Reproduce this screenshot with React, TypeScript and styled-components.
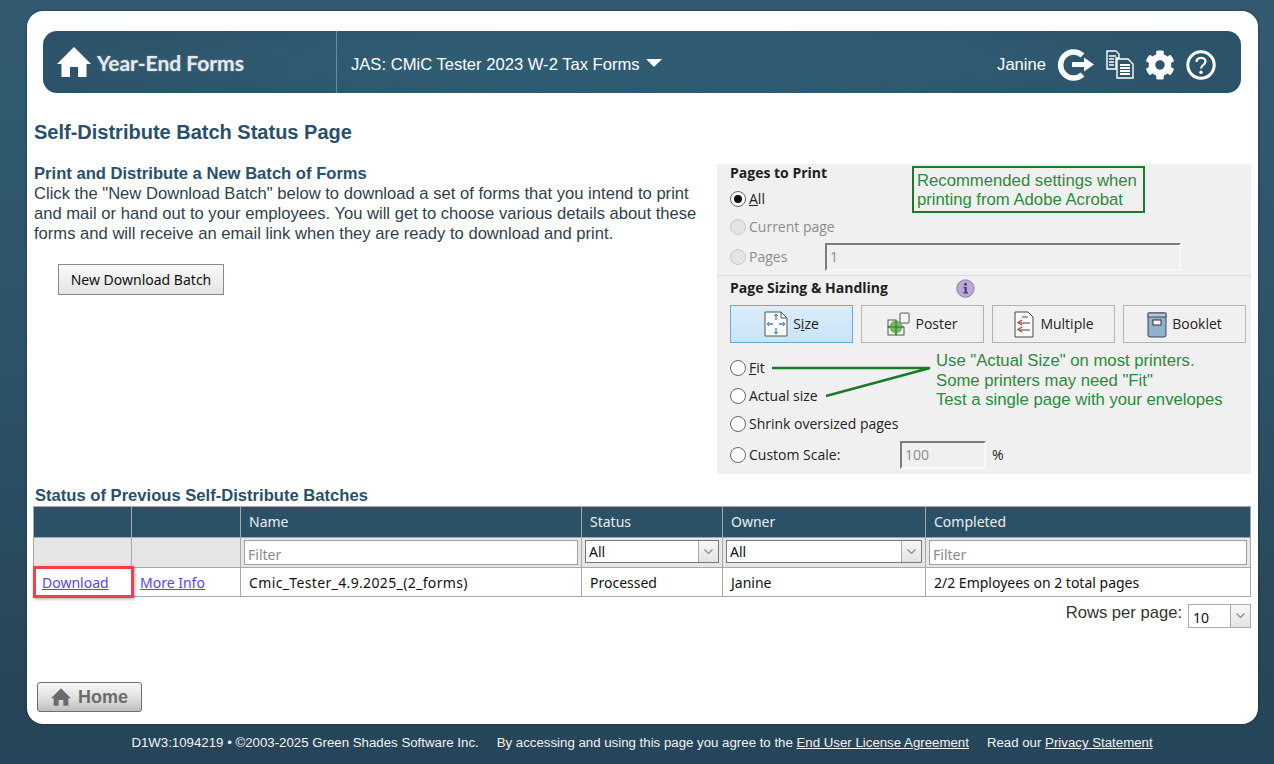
import React, { FC } from "react";
import styled, { createGlobalStyle } from "styled-components";
import { FaCog } from "react-icons/fa";

const arial = `"Liberation Sans", Arial, sans-serif`;
const tahoma = `"Noto Sans", Tahoma, sans-serif`;
const segoe = `"Open Sans", "Noto Sans", sans-serif`;

const GlobalStyle = createGlobalStyle`
  html, body {
    margin: 0;
    padding: 0;
  }
  body {
    min-height: 764px;
    overflow: hidden;
    font-family: ${arial};
    background: linear-gradient(180deg, #345a70 0, #2f5a70 90px, #2c5469 330px, #284658 680px, #27455a 764px);
  }
`;

const HomeGlyph: FC<{ size: number; color: string }> = ({ size, color }) => (
  <svg width={size} height={size} viewBox="0 0 34 34">
    <path
      fill={color}
      d="M17 2 L34 19 L29.5 19 L29.5 32 L21 32 L21 22 L13 22 L13 32 L4.5 32 L4.5 19 L0 19 Z"
    />
  </svg>
);

const LogoutIcon = () => (
  <svg width="38" height="32" viewBox="0 0 38 32">
    <path
      d="M25.5 6.5 A13 13 0 1 0 25.5 25.5"
      fill="none"
      stroke="#fff"
      strokeWidth="5.5"
    />
    <path fill="#fff" d="M15 13 H27 V8.5 L37 15.5 L27 22.5 V18 H15 Z" />
  </svg>
);

const DocsIcon = () => (
  <svg width="28" height="29" viewBox="0 0 28 29">
    <g fill="none" stroke="#fff" strokeWidth="1.4">
      <path d="M1 1 H10 L13 4 V8 H10 V19 H1 Z" />
      <path d="M3 6 H10 M3 9 H8 M3 12 H8 M3 15 H8" />
      <path d="M11 9 H22 L27 14 V28 H11 Z" />
      <path d="M14 15 H24 M14 18 H24 M14 21 H24 M14 24 H24" strokeWidth="1.8" />
    </g>
  </svg>
);

const HelpIcon = () => (
  <svg width="30" height="30" viewBox="0 0 30 30">
    <circle cx="15" cy="15" r="13.2" fill="none" stroke="#fff" strokeWidth="3" />
    <path
      d="M10.5 12 C10.5 6.5 19.5 6.5 19.5 11.5 C19.5 15 15 15 15 18.5"
      fill="none"
      stroke="#fff"
      strokeWidth="2.2"
    />
    <circle cx="15" cy="22.3" r="1.7" fill="#fff" />
  </svg>
);

const SizeIcon = () => (
  <svg width="24" height="26" viewBox="0 0 24 26">
    <path d="M1 1 H17 L23 7 V25 H1 Z" fill="#fafafa" stroke="#555" />
    <path d="M17 1 V7 H23" fill="none" stroke="#555" />
    <path
      d="M12 3 V9 M12 17 V23 M3 13 H9 M15 13 H21"
      stroke="#4a7fb0"
      strokeWidth="1.3"
    />
    <path
      d="M10 5 L12 3 L14 5 M10 21 L12 23 L14 21 M5 11 L3 13 L5 15 M19 11 L21 13 L19 15"
      fill="none"
      stroke="#4a7fb0"
    />
  </svg>
);

const PosterIcon = () => (
  <svg width="23" height="24" viewBox="0 0 23 24">
    <rect x="1" y="8" width="8" height="7" fill="#f4f4f4" stroke="#555" />
    <rect x="1" y="15" width="8" height="8" fill="#f4f4f4" stroke="#555" />
    <rect x="9" y="15" width="8" height="8" fill="#f4f4f4" stroke="#555" />
    <circle cx="9" cy="15" r="6.5" fill="#6cc24f" />
    <path d="M1 15 H17 M9 8 V23" stroke="#555" />
    <rect x="13" y="1" width="9" height="10" rx="1" fill="#f5f5f5" stroke="#555" />
  </svg>
);

const MultipleIcon = () => (
  <svg width="22" height="27" viewBox="0 0 22 27">
    <path d="M2 1 H15 L20 6 V26 H2 Z" fill="#fafafa" stroke="#444" />
    <path d="M6 12 H17 M6 19 H17 M9 6 H15" stroke="#444" />
    <path d="M9 9 L5 11.5 L9 14 M9 16 L5 18.5 L9 21" fill="none" stroke="#c23a3a" strokeWidth="1.3" />
  </svg>
);

const BookletIcon = () => (
  <svg width="20" height="27" viewBox="0 0 20 27">
    <rect x="1" y="2" width="18" height="24" rx="2" fill="#8fb1cb" stroke="#445" />
    <rect x="1" y="2" width="18" height="4" fill="#b6c9d8" stroke="#445" />
    <rect x="6" y="9" width="8" height="5" fill="#fff" stroke="#334" />
  </svg>
);

const InfoIcon = () => (
  <svg width="19" height="19" viewBox="0 0 19 19">
    <circle cx="9.5" cy="9.5" r="8.7" fill="#b9a9d6" stroke="#8d80a8" />
    <circle cx="9.5" cy="5.2" r="1.5" fill="#4b3f63" />
    <path d="M7.5 8 H10.8 V13.2 H12 V14.5 H7.3 V13.2 H8.6 V9.3 H7.5 Z" fill="#4b3f63" />
  </svg>
);

const Chevron = () => (
  <svg width="9" height="6" viewBox="0 0 9 6">
    <path d="M0.5 0.5 L4.5 4.5 L8.5 0.5" fill="none" stroke="#888" strokeWidth="1.2" />
  </svg>
);

const App: FC = () => (
  <>
    <GlobalStyle />
    <Card>
      <Header>
        <Brand>
          <HomeGlyph size={34} color="#fff" />
          <BrandName>Year-End Forms</BrandName>
        </Brand>
        <FormPicker>
          JAS: CMiC Tester 2023 W-2 Tax Forms
          <Caret />
        </FormPicker>
        <UserArea>
          <UserName>Janine</UserName>
          <LogoutIcon />
          <DocsIcon />
          <FaCog size={30} color="#fff" />
          <HelpIcon />
        </UserArea>
      </Header>

      <PageTitle>Self-Distribute Batch Status Page</PageTitle>

      <TopRow>
        <Intro>
          <IntroTitle>Print and Distribute a New Batch of Forms</IntroTitle>
          <IntroText>
            Click the "New Download Batch" below to download a set of forms that
            you intend to print and mail or hand out to your employees. You will
            get to choose various details about these forms and will receive an
            email link when they are ready to download and print.
          </IntroText>
          <PlainButton>New Download Batch</PlainButton>
        </Intro>

        <PrintPanel>
          <PanelSection>
            <PanelHead>Pages to Print</PanelHead>
            <OptionRow $mt={8}>
              <Radio $checked />
              <OptionLabel>
                <u>A</u>ll
              </OptionLabel>
            </OptionRow>
            <OptionRow $mt={10} $disabled>
              <Radio $disabled />
              <OptionLabel>Current page</OptionLabel>
            </OptionRow>
            <OptionRow $mt={7} $disabled>
              <Radio $disabled />
              <OptionLabel $w={73}>Pages</OptionLabel>
              <FakeField $w={356}>1</FakeField>
            </OptionRow>
          </PanelSection>
          <PanelDivider />
          <PanelSection>
            <SizingHead>
              <PanelHead>Page Sizing &amp; Handling</PanelHead>
              <InfoIcon />
            </SizingHead>
            <ModeButtons>
              <ModeButton $active>
                <SizeIcon />
                <span>
                  S<u>i</u>ze
                </span>
              </ModeButton>
              <ModeButton>
                <PosterIcon />
                Poster
              </ModeButton>
              <ModeButton>
                <MultipleIcon />
                Multiple
              </ModeButton>
              <ModeButton>
                <BookletIcon />
                Booklet
              </ModeButton>
            </ModeButtons>
            <OptionRow $mt={16}>
              <Radio />
              <OptionLabel>
                <u>F</u>it
              </OptionLabel>
            </OptionRow>
            <OptionRow $mt={10}>
              <Radio />
              <OptionLabel>Actual size</OptionLabel>
            </OptionRow>
            <OptionRow $mt={10}>
              <Radio />
              <OptionLabel>Shrink oversized pages</OptionLabel>
            </OptionRow>
            <OptionRow $mt={8}>
              <Radio />
              <OptionLabel $w={148}>Custom Scale:</OptionLabel>
              <FakeField $w={86}>100</FakeField>
              <Percent>%</Percent>
            </OptionRow>
          </PanelSection>

          <NoteBox>
            Recommended settings when
            <br />
            printing from Adobe Acrobat
          </NoteBox>
          <NoteText>
            Use "Actual Size" on most printers.
            <br />
            Some printers may need "Fit"
            <br />
            Test a single page with your envelopes
          </NoteText>
          <NoteLines viewBox="0 0 170 40" width="170" height="40">
            <path
              d="M0 4 H158 L54 32"
              fill="none"
              stroke="#1a7a2a"
              strokeWidth="2.4"
            />
          </NoteLines>
        </PrintPanel>
      </TopRow>

      <TableTitle>Status of Previous Self-Distribute Batches</TableTitle>
      <BatchTable>
        <colgroup>
          <col width="98" />
          <col width="109" />
          <col width="341" />
          <col width="141" />
          <col width="203" />
          <col width="325" />
        </colgroup>
        <thead>
          <HeadRow>
            <th />
            <th />
            <th>Name</th>
            <th>Status</th>
            <th>Owner</th>
            <th>Completed</th>
          </HeadRow>
          <FilterRow>
            <td />
            <td />
            <td>
              <FilterInput placeholder="Filter" />
            </td>
            <td>
              <SelectWrap>
                <FilterSelect>
                  <option>All</option>
                </FilterSelect>
                <SelectArrow>
                  <Chevron />
                </SelectArrow>
              </SelectWrap>
            </td>
            <td>
              <SelectWrap>
                <FilterSelect>
                  <option>All</option>
                </FilterSelect>
                <SelectArrow>
                  <Chevron />
                </SelectArrow>
              </SelectWrap>
            </td>
            <td>
              <FilterInput placeholder="Filter" />
            </td>
          </FilterRow>
        </thead>
        <tbody>
          <DataRow>
            <HighlightCell>
              <RowLink href="#">Download</RowLink>
              <RedMark />
            </HighlightCell>
            <td>
              <RowLink href="#">More Info</RowLink>
            </td>
            <BatchName>Cmic_Tester_4.9.2025_(2_forms)</BatchName>
            <td>Processed</td>
            <td>Janine</td>
            <td>2/2 Employees on 2 total pages</td>
          </DataRow>
        </tbody>
      </BatchTable>

      <Pager>
        Rows per page:
        <PagerSelectWrap>
          <PagerSelect>
            <option>10</option>
          </PagerSelect>
          <SelectArrow>
            <Chevron />
          </SelectArrow>
        </PagerSelectWrap>
      </Pager>

      <HomeButton>
        <HomeGlyph size={20} color="#6b6b6b" />
        Home
      </HomeButton>
    </Card>

    <Footer>
      D1W3:1094219 • ©2003-2025 Green Shades Software Inc.
      <FooterGap />
      By accessing and using this page you agree to the{" "}
      <a href="#">End User License Agreement</a>
      <FooterGap />
      Read our <a href="#">Privacy Statement</a>
    </Footer>
  </>
);

const Card = styled.div`
  box-sizing: border-box;
  width: 1231px;
  height: 713px;
  margin: 11px 0 0 27px;
  padding: 20px 7px 0;
  background: #fff;
  border-radius: 16px;
  box-shadow: 0 0 3px rgba(20, 30, 40, 0.6);
`;
const Header = styled.header`
  display: flex;
  align-items: stretch;
  height: 62px;
  margin: 0 10px 0 9px;
  border-radius: 14px;
  overflow: hidden;
  color: #fff;
  background:
    radial-gradient(ellipse 75% 120% at 50% 50%, #2f5c73 30%, #2b4f65 85%, #29485c 100%);
`;
const Brand = styled.div`
  display: flex;
  align-items: center;
  gap: 6px;
  box-sizing: border-box;
  width: 294px;
  padding-left: 14px;
  border-right: 1px solid #6f8b9a;
`;
const BrandName = styled.span`
  font-family: "Lato", ${arial};
  font-weight: 700;
  font-size: 21px;
  color: #e6eaed;
  text-shadow: 0 0 2px rgba(255, 255, 255, 0.4);
`;
const FormPicker = styled.div`
  display: flex;
  align-items: center;
  gap: 6px;
  padding: 6px 0 0 14px;
  font-size: 16.6px;
`;
const Caret = styled.span`
  width: 0;
  height: 0;
  border-left: 8px solid transparent;
  border-right: 8px solid transparent;
  border-top: 8px solid #fff;
  margin-bottom: 5px;
`;
const UserArea = styled.div`
  display: flex;
  align-items: center;
  gap: 11px;
  margin-left: auto;
  padding: 5px 25px 0 0;
`;
const UserName = styled.span`
  font-size: 16.6px;
`;
const PageTitle = styled.h1`
  margin: 28px 0 0;
  font-size: 20px;
  line-height: 22px;
  font-weight: 700;
  color: #29506a;
`;
const TopRow = styled.div`
  display: flex;
  height: 310px;
  margin-top: 21px;
`;
const Intro = styled.div`
  width: 683px;
  flex: none;
  color: #2f3f4b;
  font-size: 16.6px;
  line-height: 20px;
`;
const IntroTitle = styled.div`
  font-weight: 700;
  color: #29506a;
`;
const IntroText = styled.div`
  width: 670px;
`;
const PlainButton = styled.button`
  display: block;
  box-sizing: border-box;
  width: 166px;
  height: 31px;
  margin: 20px 0 0 24px;
  padding: 0;
  border: 1px solid #8a8a8a;
  background: linear-gradient(180deg, #fafafa, #e4e4e4);
  font-family: ${tahoma};
  font-size: 14px;
  color: #111;
`;
const PrintPanel = styled.div`
  position: relative;
  width: 534px;
  flex: none;
  background: #f0f0f0;
  font-family: ${segoe};
  font-size: 14px;
  line-height: 18px;
  color: #222;
`;
const PanelSection = styled.div`
  padding: 0 5px 0 13px;
`;
const PanelHead = styled.div`
  height: 18px;
  line-height: 18px;
  font-weight: 700;
  font-size: 14px;
  color: #1e1e1e;
`;
const PanelDivider = styled.div`
  height: 1px;
  margin-top: 4px;
  margin-bottom: 3px;
  background: #dcdcdc;
`;
const SizingHead = styled.div`
  display: flex;
  align-items: center;
  justify-content: space-between;
  width: 245px;
  height: 18px;
`;
const OptionRow = styled.div<{ $mt: number; $disabled?: boolean }>`
  display: flex;
  align-items: center;
  gap: 3px;
  min-height: 18px;
  margin-top: ${(p) => p.$mt}px;
  color: ${(p) => (p.$disabled ? "#8c8c8c" : "#222")};
`;
const Radio = styled.span<{ $checked?: boolean; $disabled?: boolean }>`
  position: relative;
  box-sizing: border-box;
  width: 16px;
  height: 16px;
  flex: none;
  border-radius: 50%;
  border: 1px solid ${(p) => (p.$disabled ? "#c8c8c8" : "#666")};
  background: ${(p) => (p.$disabled ? "#e4e4e4" : "#fff")};
  ${(p) =>
    p.$checked &&
    `&::after {
      content: "";
      position: absolute;
      inset: 3px;
      border-radius: 50%;
      background: #111;
    }`}
`;
const OptionLabel = styled.span<{ $w?: number }>`
  ${(p) => p.$w && `width: ${p.$w}px;`}
  flex: none;
`;
const FakeField = styled.div<{ $w: number }>`
  box-sizing: border-box;
  width: ${(p) => p.$w}px;
  height: 28px;
  padding-left: 3px;
  line-height: 24px;
  color: #8c8c8c;
  background: #f0f0f0;
  border: 2px solid #f8f8f8;
  border-top-color: #7c7c7c;
  border-left-color: #7c7c7c;
`;
const Percent = styled.span`
  margin-left: 3px;
`;
const ModeButtons = styled.div`
  display: grid;
  grid-template-columns: repeat(4, 123px);
  gap: 8px;
  margin-top: 8px;
`;
const ModeButton = styled.div<{ $active?: boolean }>`
  display: flex;
  align-items: center;
  justify-content: center;
  gap: 5px;
  height: 38px;
  box-sizing: border-box;
  border: 1px solid ${(p) => (p.$active ? "#6aa8d8" : "#b4b4b4")};
  background: ${(p) => (p.$active ? "linear-gradient(180deg, #dcedfb, #c9e3f8)" : "#f0f0f0")};
`;
const NoteBox = styled.div`
  position: absolute;
  left: 195px;
  top: 2px;
  box-sizing: border-box;
  width: 233px;
  height: 47px;
  padding: 3px 3px;
  border: 2px solid #1a7a2a;
  font-family: ${arial};
  font-size: 16.7px;
  line-height: 19px;
  white-space: nowrap;
  color: #2b8b3c;
`;
const NoteText = styled.div`
  position: absolute;
  left: 219px;
  top: 187px;
  font-family: ${arial};
  font-size: 16.7px;
  line-height: 19.5px;
  white-space: nowrap;
  color: #2b8b3c;
`;
const NoteLines = styled.svg`
  position: absolute;
  left: 55px;
  top: 200px;
`;
const TableTitle = styled.div`
  margin: 12px 0 0 1px;
  font-size: 16.6px;
  line-height: 20px;
  font-weight: 700;
  color: #29506a;
`;
const BatchTable = styled.table`
  width: 1217px;
  margin-left: -1px;
  table-layout: fixed;
  border-collapse: collapse;
  font-family: ${tahoma};
  font-size: 14px;
  color: #111;
  th, td {
    border: 1px solid #a8a8a8;
    padding: 0 8px;
    text-align: left;
    font-weight: 400;
  }
`;
const HeadRow = styled.tr`
  height: 31px;
  background: #2b5166;
  th {
    padding-bottom: 2px;
    color: #e8eef2;
  }
`;
const FilterRow = styled.tr`
  height: 30px;
  background: #e6e6e6;
  td {
    padding: 2px 3px 0;
    vertical-align: top;
  }
`;
const DataRow = styled.tr`
  height: 29px;
`;
const HighlightCell = styled.td`
  position: relative;
`;
const BatchName = styled.td`
  letter-spacing: 0.36px;
`;
const RedMark = styled.span`
  position: absolute;
  left: -1px;
  top: -2px;
  width: 101px;
  height: 32px;
  box-sizing: border-box;
  border: 3px solid #f0414a;
  box-shadow: 1px 1px 3px rgba(0, 0, 0, 0.35);
  pointer-events: none;
`;
const RowLink = styled.a`
  color: #5546ee;
`;
const FilterInput = styled.input`
  display: block;
  box-sizing: border-box;
  width: 100%;
  height: 25px;
  padding: 3px 3px 0;
  border: 1px solid #a0a0a0;
  background: #fff;
  font-family: ${tahoma};
  font-size: 14px;
  &::placeholder {
    color: #8a8a8a;
    opacity: 1;
  }
`;
const SelectWrap = styled.div`
  position: relative;
  height: 23px;
`;
const FilterSelect = styled.select`
  display: block;
  box-sizing: border-box;
  width: 100%;
  height: 100%;
  padding: 0 0 0 3px;
  border: 1px solid #777;
  border-radius: 0;
  background: #fff;
  appearance: none;
  font-family: ${tahoma};
  font-size: 14px;
  color: #111;
`;
const SelectArrow = styled.span`
  position: absolute;
  top: 1px;
  right: 1px;
  bottom: 1px;
  width: 20px;
  display: flex;
  align-items: center;
  justify-content: center;
  box-sizing: border-box;
  border-left: 1px solid #aaa;
  background: linear-gradient(180deg, #f7f7f7, #e3e3e3);
`;
const Pager = styled.div`
  display: flex;
  justify-content: flex-end;
  align-items: flex-start;
  gap: 6px;
  margin-top: 7px;
  font-size: 16.6px;
  line-height: 18px;
  color: #333;
`;
const PagerSelectWrap = styled(SelectWrap)`
  width: 63px;
  height: 24px;
`;
const PagerSelect = styled(FilterSelect)`
  padding-top: 2px;
  padding-left: 4px;
  border-color: #aaa;
`;
const HomeButton = styled.button`
  display: flex;
  align-items: center;
  justify-content: center;
  gap: 7px;
  box-sizing: border-box;
  width: 105px;
  height: 30px;
  margin: 54px 0 0 3px;
  padding: 0;
  border: 1px solid #6d6d6d;
  border-radius: 3px;
  background: linear-gradient(180deg, #f8f8f8 0, #dcdcdc 60%, #bdbdbd 100%);
  font-family: ${arial};
  font-weight: 700;
  font-size: 18px;
  color: #6b6b6b;
`;
const Footer = styled.footer`
  display: flex;
  justify-content: center;
  white-space: pre;
  padding-top: 12px;
  padding-left: 10px;
  font-size: 13.25px;
  line-height: 14px;
  color: #f0f4f6;
  a {
    color: #f0f4f6;
  }
`;
const FooterGap = styled.span`
  width: 18px;
`;

export default App;
